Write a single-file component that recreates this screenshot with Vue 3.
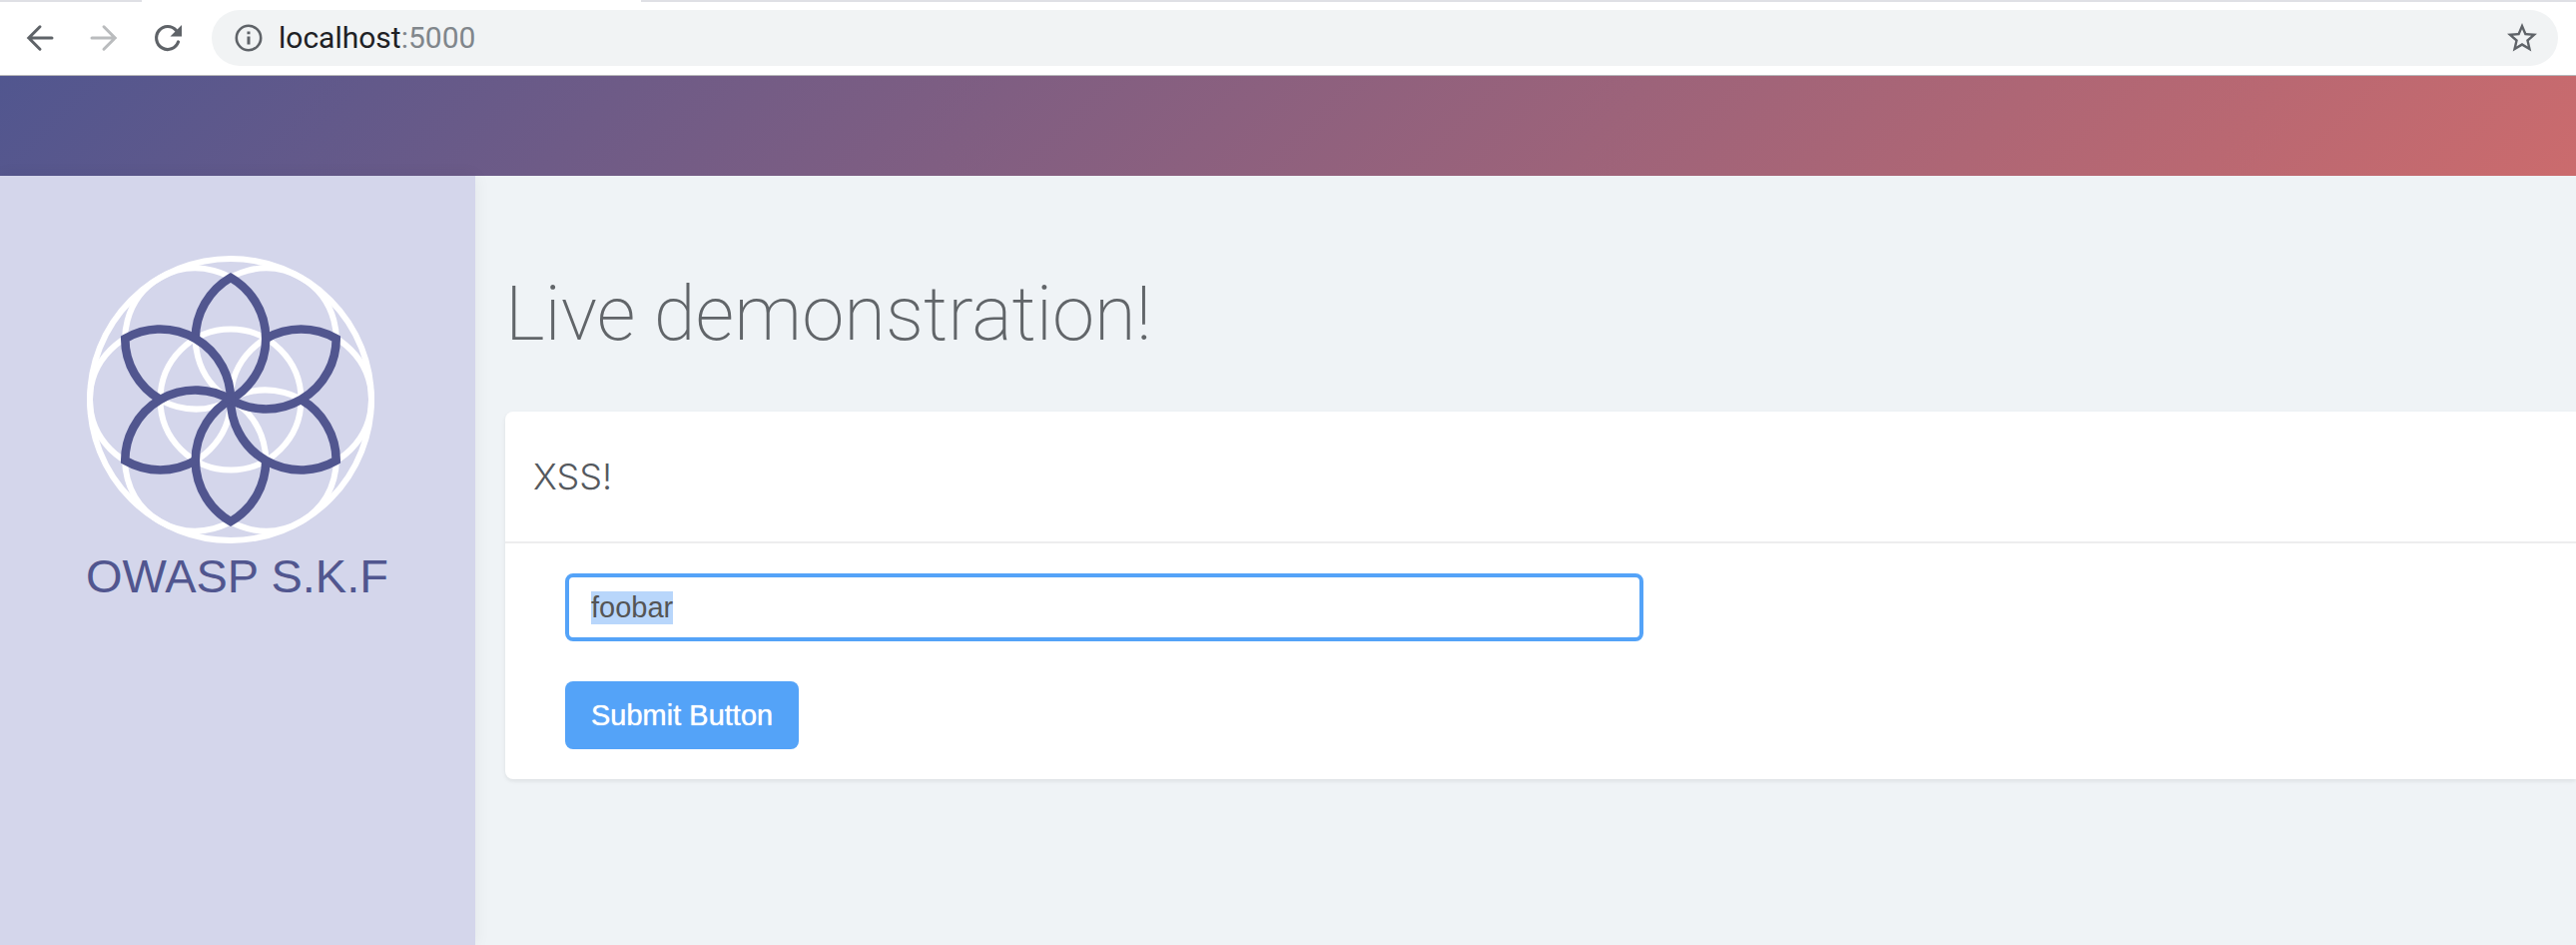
<script setup>
import { ref, onMounted } from 'vue'

const query = ref('foobar')
const field = ref(null)
const petals = [0, 60, 120, 180, 240, 300]

onMounted(() => {
  field.value.focus()
  field.value.select()
})
</script>

<template>
  <div class="page">
    <div class="browser">
      <div class="tabs"><span class="tab"></span></div>
      <div class="toolbar">
        <button class="nav" type="button" aria-label="Back">
          <svg width="32" height="32" viewBox="0 0 32 32" fill="none" stroke="#5f6368" stroke-width="3" stroke-linecap="round">
            <path d="M28 16H5M16 4.800L4.800 16L16 27.200" />
          </svg>
        </button>
        <button class="nav" type="button" aria-label="Forward" disabled>
          <svg width="32" height="32" viewBox="0 0 32 32" fill="none" stroke="#babcbe" stroke-width="3" stroke-linecap="round">
            <path d="M4 16H27M16 4.800L27.200 16L16 27.200" />
          </svg>
        </button>
        <button class="nav" type="button" aria-label="Reload">
          <svg width="32" height="32" viewBox="0 0 32 32">
            <path d="M26.500 20A11.300 11.500 0 1 1 24.500 8.500" fill="none" stroke="#5f6368" stroke-width="3.200" stroke-linecap="round" />
            <path d="M30 3V14.500H18.500Z" fill="#5f6368" />
          </svg>
        </button>
        <div class="address">
          <svg width="28" height="28" viewBox="0 0 28 28" fill="none" stroke="#5f6368">
            <circle cx="14" cy="14" r="12.200" stroke-width="2.600" />
            <path d="M14 12.500V20.500M14 7.500V10.300" stroke-width="3" />
          </svg>
          <span class="url">localhost<span class="port">:5000</span></span>
          <button class="star" type="button" aria-label="Bookmark this page">
            <svg width="36" height="36" viewBox="0 0 24 24" fill="#5f6368">
              <path d="M22 9.240l-7.190-.62L12 2 9.190 8.630 2 9.240l5.460 4.730L5.820 21 12 17.270 18.180 21l-1.630-7.030L22 9.240zM12 15.400l-3.760 2.270 1-4.280-3.320-2.880 4.380-.38L12 6.100l1.710 4.040 4.380.38-3.320 2.880 1 4.280L12 15.400z" />
            </svg>
          </button>
        </div>
      </div>
    </div>
    <header class="banner"></header>
    <div class="body">
      <aside class="sidebar">
        <svg class="logo" width="290" height="290" viewBox="-145 -145 290 290" fill="none" role="img" aria-label="OWASP S.K.F logo">
          <g stroke="#fff" stroke-width="6">
            <circle r="141" />
            <circle r="70.500" />
            <circle v-for="a in petals" :key="a" cx="70.500" r="70.500" :transform="`rotate(${a})`" />
          </g>
          <g stroke="#51568f" stroke-width="8.600">
            <path
              v-for="a in petals"
              :key="a"
              d="M-35.250 -61.050A70.500 70.500 0 0 1 0 -122.100A70.500 70.500 0 0 1 0 0"
              :transform="`rotate(${a})`"
            />
          </g>
        </svg>
        <div class="brand">OWASP S.K.F</div>
      </aside>
      <main class="content">
        <h1>Live demonstration!</h1>
        <section class="card">
          <h2>XSS!</h2>
          <form class="form" @submit.prevent>
            <input ref="field" v-model="query" class="field" type="text" aria-label="Input" />
            <button class="submit" type="submit">Submit Button</button>
          </form>
        </section>
      </main>
    </div>
  </div>
</template>

<style>
body {
  margin: 0;
}
</style>

<style scoped>
.page {
  display: flex;
  flex-direction: column;
  min-height: 100vh;
  overflow-x: hidden;
  background: #eff3f6;
  font-family: "Liberation Sans", Arial, sans-serif;
}
.browser {
  background: #fff;
  border-bottom: 1px solid #b6b6b9;
}
.tabs {
  height: 2px;
  padding-left: 142px;
  background: #dfe0e5;
}
.tab {
  display: block;
  width: 500px;
  height: 2px;
  background: #fff;
}
.toolbar {
  display: flex;
  align-items: center;
  gap: 32px;
  padding: 8px 18px 9px 24px;
}
button {
  padding: 0;
  border: 0;
  background: none;
  font: inherit;
}
.nav,
.star {
  display: flex;
}
.address {
  display: flex;
  flex: 1;
  align-items: center;
  gap: 16px;
  height: 56px;
  margin-left: -4px;
  padding: 0 18px 0 23px;
  box-sizing: border-box;
  border-radius: 28px;
  background: #f1f3f4;
}
.url {
  flex: 1;
  color: #202124;
  font: 30px/32px Roboto, sans-serif;
}
.port {
  color: #80868b;
}
.banner {
  height: 100px;
  background: linear-gradient(135deg, #51568f, #cb6b6d);
}
.body {
  display: flex;
  flex: 1;
}
.sidebar {
  display: flex;
  flex: none;
  flex-direction: column;
  width: 390px;
  padding: 79px 0 0 86px;
  background: #d4d6eb;
  box-shadow: 0 0 16px rgba(0, 0, 0, 0.06);
}
.brand {
  color: #51568f;
  font-size: 47px;
  line-height: 64px;
}
.content {
  flex: 1;
  min-width: 0;
  padding: 82px 0 0 30px;
}
h1 {
  margin: 0;
  color: #616569;
  font: 200 76px/112px Roboto, sans-serif;
}
.card {
  margin-top: 42px;
  border-radius: 8px 0 0 8px;
  background: #fff;
  box-shadow: 0 2px 4px rgba(0, 0, 0, 0.08);
}
h2 {
  margin: 0;
  padding: 41px 28px;
  border-bottom: 2px solid #ededee;
  color: #55595e;
  font: 300 36px/48px Inter, sans-serif;
}
.form {
  display: flex;
  flex-direction: column;
  align-items: flex-start;
  gap: 40px;
  padding: 30px 60px;
}
.field {
  width: 100%;
  max-width: 1080px;
  height: 68px;
  padding: 0 22px;
  box-sizing: border-box;
  border: 4px solid #54a3f8;
  border-radius: 8px;
  outline: 0;
  background: #fff;
  color: #555;
  font: 29px/32px "Liberation Sans", Arial, sans-serif;
}
.field::selection {
  background: #b8d6fb;
  color: #555;
}
.submit {
  height: 68px;
  padding: 0 26px;
  border-radius: 8px;
  background: #54a3f8;
  color: #fff;
  font-size: 29px;
  text-shadow: 0 0 1px #fff;
}
</style>
